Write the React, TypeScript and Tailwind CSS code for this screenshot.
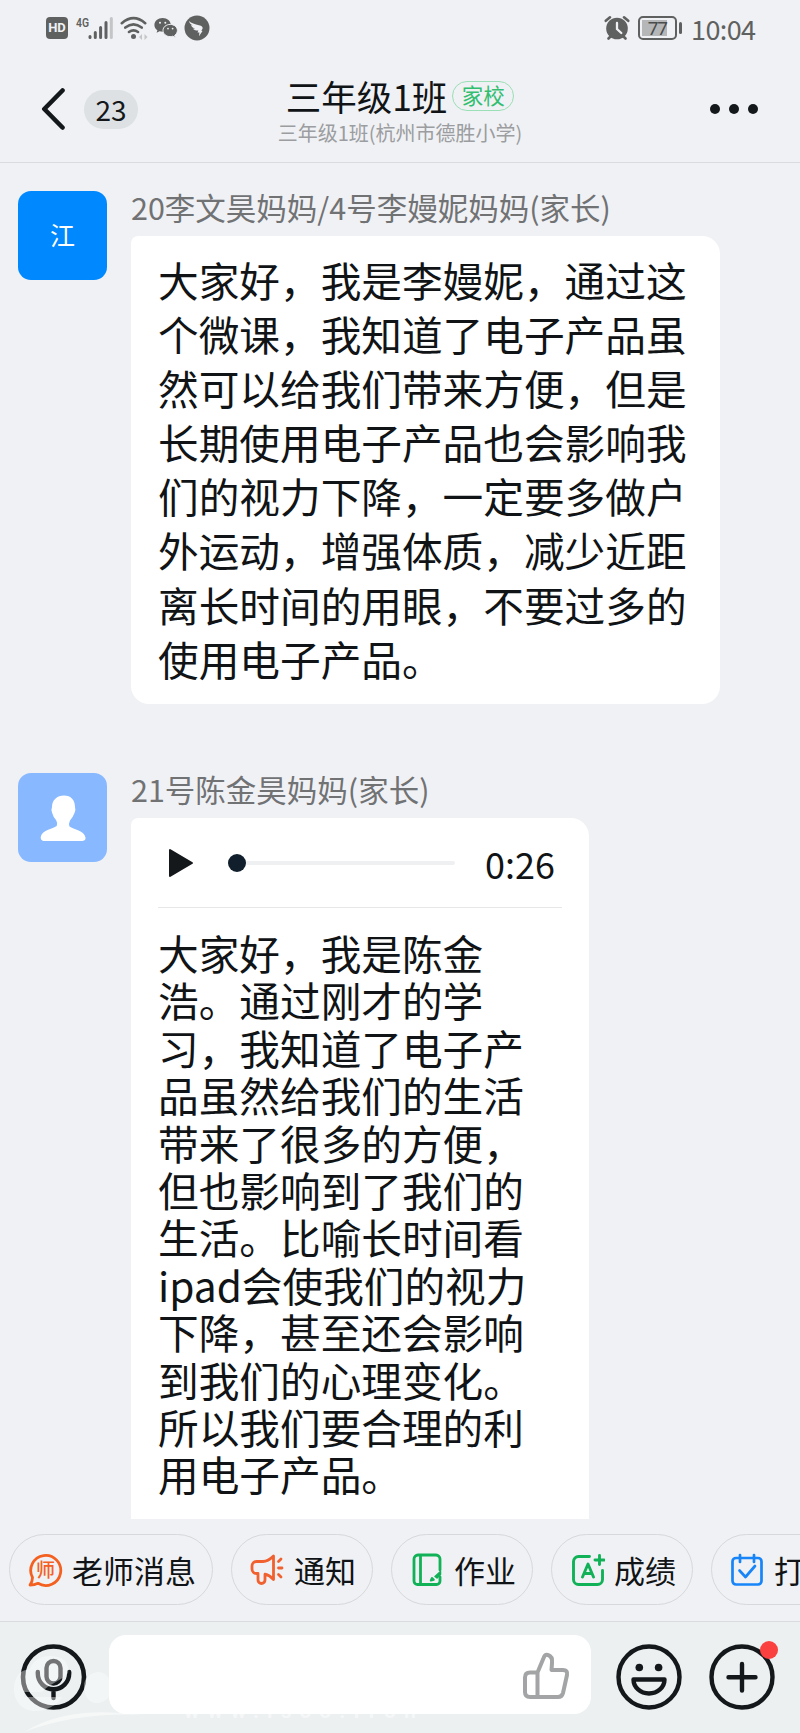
import type { ReactNode } from "react";

const firstMessage = [
    "大家好，我是李嫚妮，通过这",
    "个微课，我知道了电子产品虽",
    "然可以给我们带来方便，但是",
    "长期使用电子产品也会影响我",
    "们的视力下降，一定要多做户",
    "外运动，增强体质，减少近距",
    "离长时间的用眼，不要过多的",
    "使用电子产品。",
];

const secondMessage = [
    "大家好，我是陈金",
    "浩。通过刚才的学",
    "习，我知道了电子产",
    "品虽然给我们的生活",
    "带来了很多的方便，",
    "但也影响到了我们的",
    "生活。比喻长时间看",
    "ipad会使我们的视力",
    "下降，甚至还会影响",
    "到我们的心理变化。",
    "所以我们要合理的利",
    "用电子产品。",
];

function StatusBar() {
    return (
        <div className="flex h-[56px] items-center pr-[46px] pl-[46px] text-[#5f6160]">
            <div className="flex h-[22px] w-[22px] items-center justify-center rounded-[4px] bg-[#5f6160] font-['Roboto',sans-serif] text-[13px] font-bold text-[#f0f1f4]">
                HD
            </div>
            <svg className="ml-[8px]" width="38" height="26" viewBox="0 0 38 26">
                <text x="0" y="12" fontFamily="Roboto, sans-serif" fontSize="13.5" fontWeight="600" textLength="13" lengthAdjust="spacingAndGlyphs" fill="#5f6160">4G</text>
                <g stroke="#5f6160" strokeWidth="3" strokeLinecap="round">
                    <path d="M14 22.5v-1M19.3 22.5v-5M24.6 22.5v-10M30 22.5v-15" />
                    <path d="M35.3 22.5v-19" stroke="#c3c5c6" />
                </g>
            </svg>
            <svg className="ml-[6px]" width="28" height="26" viewBox="0 0 28 26">
                <g fill="none" stroke="#5f6160" strokeWidth="2.6" strokeLinecap="round">
                    <path d="M1.8 8.2Q13.5-1.8 25.2 8.2M5.3 12.6q8.2-6.6 16.4 0M9 17q4.5-3.4 9 0" />
                </g>
                <circle cx="13.5" cy="21.5" r="2.5" fill="#5f6160" />
                <path d="M22 19v6l-3-3zM24.5 19v6l3-3z" fill="#c3c5c6" />
            </svg>
            <svg className="ml-[6px]" width="24" height="22" viewBox="0 0 24 22">
                <path d="M8.6 1C3.9 1 .4 4.1.4 7.9c0 2.200 1.100 4 3 5.300l-.8 2.600 3-1.500q1.400.400 3 .400C13.300 14.700 16.800 11.600 16.800 7.900S13.300 1 8.600 1z" fill="#5f6160" />
                <path d="M16.200 7.400c-4 0-7.200 2.700-7.200 6.100s3.200 6.100 7.200 6.100q1.400 0 2.600-.4l2.600 1.400-.7-2.300c1.600-1.100 2.700-2.800 2.700-4.800 0-3.400-3.200-6.100-7.200-6.100z" fill="#5f6160" stroke="#f0f1f4" strokeWidth="1" />
                <g fill="#f0f1f4">
                    <circle cx="6" cy="5.700" r="1" />
                    <circle cx="11.300" cy="5.700" r="1" />
                    <circle cx="14" cy="11.600" r=".9" />
                    <circle cx="18.600" cy="11.600" r=".9" />
                </g>
            </svg>
            <svg className="ml-[6px]" width="26" height="26" viewBox="0 0 26 26">
                <circle cx="13" cy="13" r="12.500" fill="#5f6160" />
                <path d="M5 6c2 2.500 6 3 10 4.200 2.800.8 4 1.600 3.600 3.200-.3 1.200-1.300 2.300-1.300 2.300l1.200.3-3.500 5.200.4-3.600-1.900-.2.900-1.900c-2.500.2-4.500-.5-5.400-2 1.300.3 2.100.2 2.100.2-2-.7-3.700-2-4-3.700l2 .5C7 9.500 5.400 8.200 5 6z" fill="#f0f1f4" />
            </svg>

            <svg className="ml-auto" width="26" height="26" viewBox="0 0 26 26">
                <circle cx="13" cy="13.500" r="10.800" fill="#5f6160" />
                <path d="M1.800 5.800 6 2.300M24.200 5.800 20 2.300M4.500 23.500l2.500-2.500M21.500 23.500 19 21" stroke="#5f6160" strokeWidth="2.600" strokeLinecap="round" />
                <path d="M13 8v6l4.300 4" fill="none" stroke="#f0f1f4" strokeWidth="2.300" strokeLinecap="round" />
            </svg>
            <div className="ml-[8px] flex h-[24px] w-[39px] items-center rounded-[5px] border-2 border-[#5f6160] p-[2px]">
                <div className="flex h-[16px] w-[25px] items-center justify-end bg-[#b5b6b8] pr-[0px] font-['Roboto',sans-serif] text-[19px] leading-none tracking-[-1px] text-[#4a4c4c]">77</div>
            </div>
            <div className="ml-[2px] h-[12px] w-[3px] rounded-sm bg-[#5f6160]" />
            <div className="ml-[9px] w-[63px] text-[27px] leading-none whitespace-nowrap tracking-[-0.6px]">10:04</div>
        </div>
    );
}

function Header() {
    return (
        <div className="flex h-[107px] items-start border-b border-[#d9dbde]">
            <div className="flex w-[240px] items-center pt-[32px] pl-[41px]">
                <svg width="26" height="42" viewBox="0 0 26 42" fill="none" stroke="#14181b" strokeWidth="4.600" strokeLinecap="round" strokeLinejoin="round">
                    <path d="M21.500 2.500 3.300 21l18.200 18.500" />
                </svg>
                <div className="ml-[17px] flex h-[39px] w-[54px] items-center justify-center rounded-full bg-[#dde1e4] pb-px text-[28px] leading-none text-[#14181b]">23</div>
            </div>
            <div className="flex w-[320px] flex-col items-center pt-[18px]">
                <div className="flex items-center">
                    <div className="text-[35.500px] leading-[44px] whitespace-nowrap text-[#111416]">三年级1班</div>
                    <div className="ml-[5px] flex h-[30px] w-[62px] items-center justify-center rounded-full border border-[#9adfb6] pb-[2px] text-[21.500px] leading-none text-[#32be70]">家校</div>
                </div>
                <div className="mt-[2px] text-[20px] leading-[26px] whitespace-nowrap text-[#9b9da0]">三年级1班(杭州市德胜小学)</div>
            </div>
            <div className="flex flex-1 justify-end gap-[9px] pt-[48px] pr-[42px]">
                <div className="h-[10px] w-[10px] rounded-full bg-[#14181b]" />
                <div className="h-[10px] w-[10px] rounded-full bg-[#14181b]" />
                <div className="h-[10px] w-[10px] rounded-full bg-[#14181b]" />
            </div>
        </div>
    );
}

function Message({ avatar, name, children }: { avatar: ReactNode; name: string; children: ReactNode }) {
    return (
        <div className="flex items-start pl-[18px]">
            {avatar}
            <div className="ml-[24px]">
                <div className="h-[45px] text-[30.500px] leading-[32px] whitespace-nowrap text-[#707274]">{name}</div>
                {children}
            </div>
        </div>
    );
}

function AudioPlayer() {
    return (
        <div className="mx-[27px] flex h-[90px] items-center border-b border-[#e6e7e9]">
            <svg className="ml-[10px]" width="26" height="30" viewBox="0 0 26 30">
                <path d="M2 2v26l22-13z" fill="#14181b" stroke="#14181b" strokeWidth="2" strokeLinejoin="round" />
            </svg>
            <div className="ml-[34px] h-[18px] w-[18px] rounded-full bg-[#111f2c]" />
            <div className="h-[4px] w-[209px] rounded-r-full bg-[#eff0f2]" />
            <div className="ml-[30px] text-[36px] leading-none whitespace-nowrap text-[#111416]">0:26</div>
        </div>
    );
}

function Shortcut({ icon, label, width }: { icon: ReactNode; label: string; width: string }) {
    return (
        <div className={`flex h-[71px] shrink-0 items-center rounded-full border border-[#d7d8da] pl-[17px] ${width}`}>
            {icon}
            <span className="ml-[9px] text-[31px] leading-[40px] whitespace-nowrap text-[#111416]">{label}</span>
        </div>
    );
}

const teacherIcon = (
    <svg className="shrink-0" width="36" height="36" viewBox="0 0 36 36">
        <path d="M5.500 25.500A15 15 0 1 1 11 31.300Q7.500 33 3 33q2.500-3.500 2.500-7.500z" fill="none" stroke="#f4601f" strokeWidth="2.800" strokeLinejoin="round" />
        <text x="9" y="25" fontFamily="Noto Sans CJK SC, sans-serif" fontSize="19" fontWeight="500" fill="#f4601f">师</text>
    </svg>
);

const noticeIcon = (
    <svg className="shrink-0" width="36" height="36" viewBox="0 0 36 36" fill="none" stroke="#f0612f" strokeWidth="2.800" strokeLinecap="round" strokeLinejoin="round">
        <path d="M7.500 9.500H14c4 0 7-2 10.500-5.500v23.500c-2.500-2.800-5-4.500-8.500-5.300V28a3.500 3.500 0 0 1-7 0v-6.500H7.500a4.500 4.500 0 0 1-4.500-4.500v-3a4.500 4.500 0 0 1 4.500-4.500z" />
        <path d="m29.500 9.500 2.500-2.500M29.500 16h3.500M29.500 22.500 32 25" />
    </svg>
);

const homeworkIcon = (
    <svg className="shrink-0" width="36" height="36" viewBox="0 0 36 36" fill="none" stroke="#11b158" strokeWidth="2.800" strokeLinecap="round" strokeLinejoin="round">
        <path d="M31 18V7a4 4 0 0 0-4-4H9a4 4 0 0 0-4 4v22a3.500 3.500 0 0 0 3.500 3.500h19A3.500 3.500 0 0 0 31 29v-4M11.500 3v29" />
        <path d="m31.500 19.500-5.500 5 2 1.500 3.500-3.500z" fill="#11b158" strokeWidth="1.500" />
        <path d="m23 26-1.200 2.500 3-.7z" strokeWidth="2" />
    </svg>
);

const gradeIcon = (
    <svg className="shrink-0" width="36" height="36" viewBox="0 0 36 36" fill="none" stroke="#11b158" strokeWidth="2.900" strokeLinecap="round" strokeLinejoin="round">
        <path d="M20.500 4.500H9.500a5 5 0 0 0-5 5v18a5 5 0 0 0 5 5h19a5 5 0 0 0 5-5V18.500" />
        <path d="M13.500 25 19 12l5.500 13M15.500 21.500h7M30.500 3.500v9M26 8h9" />
    </svg>
);

const checkInIcon = (
    <svg className="shrink-0" width="36" height="36" viewBox="0 0 36 36" fill="none" stroke="#1785f8" strokeWidth="2.700" strokeLinecap="round" strokeLinejoin="round">
        <rect x="3.500" y="6" width="29" height="26.500" rx="3.500" />
        <path d="M11 3v7M25 3v7M10.500 18.500l6 6.500 9.500-11" />
    </svg>
);

function InputBar() {
    return (
        <div className="flex h-[112px] items-start border-t border-[#d9dbde] bg-[#ecf0f1] pt-[13px]">
            <div className="relative h-[98px] w-[109px]">
                {/* faint white mark lying over the corner of the bar */}
                <svg className="absolute top-0 left-0 h-[98px] w-[430px]" viewBox="0 0 430 98">
                    <circle cx="53.500" cy="42" r="30.500" fill="none" stroke="#14181b" strokeWidth="4.600" />
                    <g fill="none" stroke="#14181b" strokeWidth="4.400" strokeLinecap="round">
                        <rect x="46.500" y="26" width="14" height="22.500" rx="7" />
                        <path d="M37.800 37v1.500a15.500 15.500 0 0 0 31.400 0V37M53.500 55v8" />
                    </g>
                    <path d="M14 54c0-12 6-19 16-20C34 20 55 17 65 26c3 4 4 8 3 12-8 9-18 10-26 19H24v5h38c-5 8-15 14-27 14S14 67 14 54z" fill="#fff" fillOpacity=".4" />
                    <path d="M84 51c0-8 6-13 14-14q8 0 11 7v18q-5 6-13 6c-7 0-12-7-12-17z" fill="#fff" fillOpacity=".4" />
                    <path d="M24 97Q62 73 122 78l22 2Q78 77 24 97z" fill="#fff" fillOpacity=".5" />
                    <text x="184" y="83" fontFamily="Roboto, sans-serif" fontSize="21" letterSpacing="8" fontWeight="700" fill="#fff" fillOpacity=".5">www.isoo.fron</text>
                </svg>
            </div>
            <div className="relative flex h-[79px] w-[482px] items-center justify-end rounded-[17px] bg-white pr-[21px]">
                <svg width="50" height="50" viewBox="0 0 50 50" fill="none" stroke="#a3a4a5" strokeWidth="4" strokeLinecap="round" strokeLinejoin="round">
                    <path d="M17.500 22.500 24 7q1.200-3 4-2 4.800 1.500 4 8l-.5 7H43q5 0 4 5l-4 18q-1 4-5 4H10q-5 0-5-5V27.500q0-5 5-5zM17.500 23v23.500" />
                </svg>
            </div>
            <svg className="mt-[8px] ml-[24px]" width="68" height="68" viewBox="0 0 68 68" fill="none" stroke="#14181b" strokeWidth="4.400" strokeLinejoin="round">
                <circle cx="34" cy="34" r="30.500" />
                <circle cx="24.300" cy="24.500" r="3.800" fill="#14181b" stroke="none" />
                <circle cx="43.600" cy="24.500" r="3.800" fill="#14181b" stroke="none" />
                <path d="M18.500 36.500h31a15.500 14 0 0 1-31 0z" />
            </svg>
            <div className="relative mt-[8px] ml-[25px]">
                <svg width="68" height="68" viewBox="0 0 68 68" fill="none" stroke="#14181b" strokeWidth="4.400" strokeLinecap="round">
                    <circle cx="34" cy="34" r="30.500" />
                    <path d="M34 21v26.500M20.500 34.300h27" />
                </svg>
                <div className="absolute top-[-2px] left-[52px] h-[18px] w-[18px] rounded-full bg-[#fb4040]" />
            </div>
        </div>
    );
}

export default function App() {
    return (
        <div className="flex h-[1733px] w-[800px] flex-col overflow-hidden bg-[#f0f1f4] font-['Noto_Sans_CJK_SC',sans-serif]">
            <StatusBar />
            <Header />

            <div className="flex h-[1356px] flex-col gap-[69px] overflow-hidden pt-[28px]">
                <Message
                    name="20李文昊妈妈/4号李嫚妮妈妈(家长)"
                    avatar={<div className="flex h-[89px] w-[89px] items-center justify-center rounded-[13px] bg-[#0088ff] pb-px text-[25px] text-white">江</div>}
                >
                    <div className="h-[468px] w-[589px] rounded-[18px] rounded-tl-[7px] bg-white pt-[17px] pl-[27px] text-[40.670px] leading-[54.100px] whitespace-nowrap text-[#111416]">
                        {firstMessage.map((line) => (
                            <div key={line}>{line}</div>
                        ))}
                    </div>
                </Message>

                <Message
                    name="21号陈金昊妈妈(家长)"
                    avatar={
                        <div className="flex h-[89px] w-[89px] items-center justify-center rounded-[13px] bg-[#88b8ff]">
                            <svg width="46" height="46" viewBox="0 0 46 46" fill="#fff">
                                <path d="M12 12C12 5 17 .5 24 .5c7 0 11 4.500 11 11.500q1 3-.5 6-1.500 4-4.500 7.500-1.500 3-.5 6c4 3 15 4 16 11q.5 3-3 3.500h-39Q.5 45.500.7 42c1-7 12-8 16-11q1.300-3-.7-6-3-3.500-3.800-7-1.500-3-.2-6z" />
                            </svg>
                        </div>
                    }
                >
                    <div className="h-[730px] w-[458px] rounded-[18px] rounded-tl-[7px] bg-white">
                        <AudioPlayer />
                        <div className="pt-[21px] pl-[27px] text-[40.670px] leading-[47.400px] whitespace-nowrap text-[#111416]">
                            {secondMessage.map((line) => (
                                <div key={line}>{line}</div>
                            ))}
                        </div>
                    </div>
                </Message>
            </div>

            <div className="flex h-[102px] gap-[18px] overflow-hidden pt-[15px] pl-[9px]">
                <Shortcut icon={teacherIcon} label="老师消息" width="w-[204px]" />
                <Shortcut icon={noticeIcon} label="通知" width="w-[142px]" />
                <Shortcut icon={homeworkIcon} label="作业" width="w-[142px]" />
                <Shortcut icon={gradeIcon} label="成绩" width="w-[142px]" />
                <Shortcut icon={checkInIcon} label="打卡" width="w-[142px]" />
            </div>

            <InputBar />
        </div>
    );
}
